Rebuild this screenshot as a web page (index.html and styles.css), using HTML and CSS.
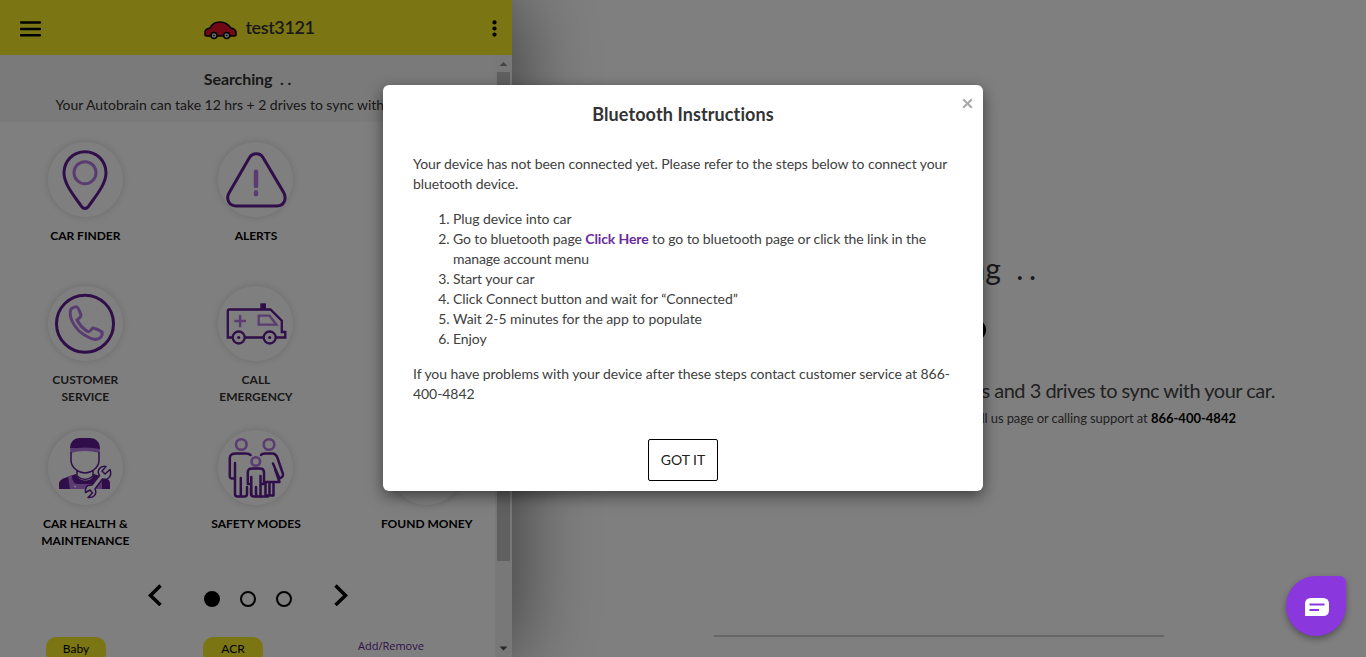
FILE: index.html
```
<!DOCTYPE html>
<html lang="en">
<head>
<meta charset="utf-8">
<title>Autobrain</title>
<link rel="stylesheet" href="styles.css">
</head>
<body>
<div class="page">
  <div class="app">
    <header class="topbar">
      <svg class="menu" width="21" height="16" viewBox="0 0 21 16"><path d="M1 1.500H20M1 8H20M1 14.200H20" stroke="#000" stroke-width="2.400" stroke-linecap="round"/></svg>
      <div class="vehicle">
        <svg width="33" height="19" viewBox="0 0 33 19"><path d="M1 14V10.500Q1.500 8 6 7C8 3 11 1 16 1s8 2 11 6q4 .5 5 4v3q0 1-1.500 1H2.500Q1 15 1 14z" fill="#e3132a" stroke="#000" stroke-width="1.500"/><circle cx="10" cy="14.500" r="3" fill="#d4d8dc" stroke="#000" stroke-width="1.500"/><circle cx="22.700" cy="14.500" r="3" fill="#d4d8dc" stroke="#000" stroke-width="1.500"/><circle cx="10" cy="14.500" r=".8"/><circle cx="22.700" cy="14.500" r=".8"/></svg>
        <span>test3121</span>
      </div>
      <svg class="more" width="5" height="17" viewBox="0 0 5 17"><circle cx="2.500" cy="2.400" r="2.100"/><circle cx="2.500" cy="8.500" r="2.100"/><circle cx="2.500" cy="14.600" r="2.100"/></svg>
    </header>
    <div class="body">
      <div class="content">
        <div class="status"><div class="status-title">Searching&nbsp; . .</div><div class="status-sub">Your Autobrain can take 12 hrs + 2 drives to sync with your car.</div></div>
        <div class="tiles">
          <div class="tile"><div class="disc"><svg viewBox="0 0 75 75"><path class="d w3" d="M37 9.700C25 9.700 16 19 16 31c0 12 12 25 17.500 33.500q3.500 4 7 0C46 56 58 43 58 31 58 19 49 9.700 37 9.700z"/><circle class="l w3" cx="37" cy="30.700" r="11"/></svg></div><span>CAR FINDER</span></div>
          <div class="tile"><div class="disc"><svg viewBox="0 0 75 75"><path class="d w3" d="M31.500 15.500L11.300 50.500C7.500 57 11 64 18 64H59C66 64 69 57 65.700 50.500L45 15.500C42 10.500 34.500 10.500 31.500 15.500z"/><path class="l" stroke-width="4.500" stroke-linecap="round" d="M38 29.700V44M38 50.300V52.300"/></svg></div><span>ALERTS</span></div>
          <div class="tile"><div class="disc"></div></div>
          <div class="tile soft"><div class="disc"><svg viewBox="0 0 75 75"><circle class="d w3" cx="37" cy="37.700" r="28.500"/><path class="l w3" d="M23 23Q27 20 29 21Q31 23 33 29Q33 31 29 34Q32 40 38 44.500Q41 47 43 44L45 42Q50 43 54 46Q55 49 52 52Q47 55 41 51.500Q29 46 24 35Q21 28 23 23z"/></svg></div><span>CUSTOMER<br>SERVICE</span></div>
          <div class="tile soft mid"><div class="disc"><svg viewBox="0 0 75 75"><path class="d w2" d="M14.500 51.500H9.800V25q0-1.500 1.500-1.500H52.500L63.800 34.800V46H67.300V51.500H58M27 51.500H45.500"/><path d="M42.300 17.300H48V23.500H42.300z" fill="#5f1c93"/><circle class="d w2" cx="20.700" cy="51.500" r="6"/><circle class="d w2" cx="51.700" cy="51.500" r="6"/><circle cx="20.700" cy="51.500" r="1.600" fill="#5f1c93"/><circle cx="51.700" cy="51.500" r="1.600" fill="#5f1c93"/><path class="l" stroke-width="2.500" d="M16.300 35H28M22.100 29V41.300"/><path class="l w2" d="M40.700 29.700H51.500L58.500 38.700H40.700z"/></svg></div><span>CALL<br>EMERGENCY</span></div>
          <div class="tile"><div class="disc"></div></div>
          <div class="tile"><div class="disc"><svg viewBox="0 0 75 75"><path fill="#5f1c93" d="M22 18.500C22 11 27 8 32 8H42C48 8 52 12 52 19z"/><path fill="#b578e5" d="M22 19Q37 16 52 19L51.500 23Q37 19 22.500 23z"/><path class="d" stroke-width="1.500" d="M23 22V30C23 38 31 43 37 43S51 38 51 30V22M29 40V46Q37 53 45 46V40"/><path fill="#5f1c93" d="M11 59V53Q12 49 18 47.500L28 44Q30 50 37 50.500T46 44L56 47.500Q62 49 62 53V59z"/><path fill="#b578e5" d="M20 46.500L23.500 45.500Q25 54 29 54H45Q49 54 50.500 45.500L54 46.500V59H22z"/><circle cx="27" cy="56.500" r="1" fill="#fff"/><path fill="#fff" stroke="#5f1c93" stroke-width="1.500" stroke-linejoin="round" d="M58 36.500L54 41L57 44L62 39.500Q64 45 60.500 48Q57.500 50 54.500 49L47 59Q49 63 46 66Q44 68 40 67.500L44.500 63L42 60L37.500 62.500Q37 57 40 55.500L44 55L51.500 45.500Q49 42 51.500 38.500Q54 35.500 58 36.500z"/></svg></div><span>CAR HEALTH &amp;<br>MAINTENANCE</span></div>
          <div class="tile"><div class="disc"><svg viewBox="0 0 75 75"><g class="l" stroke-width="2.600"><circle cx="23.300" cy="14.500" r="5.300"/><circle cx="51" cy="14.500" r="5.300"/><circle cx="37.800" cy="31.500" r="4.300"/></g><g class="d" stroke-width="2.500" stroke-linecap="round" stroke-linejoin="round"><path d="M32.500 25Q31 23.500 28 23.500H18Q12 23.500 11.800 28V47Q12 49 16.500 48.500M17 33V64Q17 66.500 19.500 66.500H26.500Q29 66.500 29 64V57M22.800 48V65"/><path d="M43 25Q44 23.500 47 23.500H54Q58 23.500 59.500 28L65 44Q65.500 47 61.500 48.500L55 33.500M57 39L61.500 52H47M47.500 53V65.500H55.500V53M51.500 53V65M43 66.500H50"/><path d="M33 58V64Q33 66.500 36 66.500M29.800 54V42Q30 38.500 34 38.500H42Q45.800 38.500 46 42V54H42.500V66.500H40Q38 66.500 38 63V57M33.300 47V63Q33.300 66.500 36 66.500H38M30 54H33M42.500 46V53"/></g></svg></div><span>SAFETY MODES</span></div>
          <div class="tile"><div class="disc"></div><span>FOUND MONEY</span></div>
        </div>
        <div class="pager">
          <svg class="chev" width="14" height="22" viewBox="0 0 14 22"><path d="M12.500 1.500L2.500 11.500L12.500 21" fill="none" stroke="#000" stroke-width="3.500"/></svg>
          <div class="dots"><i class="on"></i><i></i><i></i></div>
          <svg class="chev" width="14" height="22" viewBox="0 0 14 22"><path d="M1.500 1.500L11.500 11.500L1.500 21" fill="none" stroke="#000" stroke-width="3.500"/></svg>
        </div>
        <div class="tags"><span class="tag">Baby</span><span class="tag">ACR</span><a class="edit">Add/Remove</a></div>
      </div>
      <div class="scroll"><svg width="17" height="17" viewBox="0 0 17 17"><path d="M4.500 11L8.500 7L12.500 11z" fill="#888"/></svg><div class="thumb"></div><svg width="17" height="17" viewBox="0 0 17 17"><path d="M4.500 6.500L8.500 10.500L12.500 6.500z" fill="#505050"/></svg></div>
    </div>
  </div>
  <main class="main">
    <div class="big">Searching&nbsp; <span>. .</span></div>
    <div class="loader"></div>
    <div class="sync">hours and 3 drives to sync with your car.</div>
    <div class="help">call us page or calling support at <b>866-400-4842</b></div>
    <div class="rule"></div>
  </main>
</div>
<div class="overlay">
  <section class="modal">
    <button class="close" aria-label="Close"><svg width="11" height="11" viewBox="0 0 11 11"><path d="M1.200 1.200L9.800 9.800M9.800 1.200L1.200 9.800" stroke="#aaa" stroke-width="2.200"/></svg></button>
    <h4>Bluetooth Instructions</h4>
    <div class="copy">
      <p>Your device has not been connected yet. Please refer to the steps below to connect your bluetooth device.</p>
      <ol>
        <li>Plug device into car</li>
        <li class="long">Go to bluetooth page <a>Click Here</a> to go to bluetooth page or click the link in the manage account menu</li>
        <li>Start your car</li>
        <li>Click Connect button and wait for “Connected”</li>
        <li>Wait 2-5 minutes for the app to populate</li>
        <li>Enjoy</li>
      </ol>
      <p>If you have problems with your device after these steps contact customer service at 866-400-4842</p>
    </div>
    <button class="ok">GOT IT</button>
  </section>
</div>
<div class="chat"><svg width="24" height="18" viewBox="0 0 24 18"><path d="M0 18V6Q0 0 6 0H18Q24 0 24 6V12Q24 18 18 18z" fill="#fff"/><path d="M4.500 6.500H19.500M4.500 12H14" stroke="#8a37de" stroke-width="1.800"/></svg></div>
</body>
</html>
```
FILE: styles.css
```
* { box-sizing: border-box; }
body { margin: 0; height: 657px; overflow: hidden; font: 14px/20px Lato, sans-serif; font-variant-ligatures: none; color: #333; background: #fff; }
svg { display: block; }
.page { display: flex; height: 657px; }
.app { position: relative; width: 512px; flex: none; display: flex; flex-direction: column; background: #fff; box-shadow: 0 0 80px rgba(0,0,0,.6); z-index: 1; }
.topbar { height: 55px; flex: none; background: #f6ea26; display: flex; align-items: center; justify-content: space-between; padding: 2px 15px 0 20px; }
.vehicle { display: flex; align-items: center; gap: 8px; font-size: 18px; font-weight: 600; letter-spacing: -.4px; padding-right: 14px; }
.vehicle svg { margin-top: 3px; }
.vehicle span { margin-top: -3px; }
.body { flex: 1; min-height: 0; display: flex; overflow: hidden; }
.content { width: 495px; flex: none; overflow: hidden; }
.status { height: 67px; background: #f5f5f5; text-align: center; padding-top: 14px; white-space: nowrap; }
.status-title { font-size: 16px; font-weight: 700; letter-spacing: -.1px; }
.status-sub { padding-top: 6px; letter-spacing: -.04px; }
.tiles { width: 512px; display: grid; grid-template-columns: repeat(3, 1fr); grid-auto-rows: 144px; padding-top: 20px; }
.tile { display: flex; flex-direction: column; align-items: center; gap: 10px; text-align: center; font-size: 12px; line-height: 17px; font-weight: 700; color: #000; }
.soft { color: #333; }
.mid svg { margin-left: -.5px; width: 75px; }
.disc { width: 75px; height: 75px; flex: none; border-radius: 50%; background: #fff; box-shadow: 0 0 8px rgba(0,0,0,.16); }
.d { fill: none; stroke: #5f1c93; }
.l { fill: none; stroke: #b578e5; }
.w3 { stroke-width: 3; }
.w2 { stroke-width: 2.3; }
.pager { height: 48px; padding: 10px 0 0 148px; display: flex; gap: 42px; }
.dots { display: flex; gap: 20px; padding-top: 7px; }
.dots i { width: 16px; height: 16px; border: 2px solid #000; border-radius: 50%; }
.dots .on { background: #000; }
.tags { display: flex; padding: 15px 0 0 46px; font-size: 12px; color: #000; }
.tag { width: 60px; height: 26px; border-radius: 10px; background: #f6ea26; text-align: center; line-height: 24px; margin-right: 97px; }
.tag + .tag { margin-right: 95px; }
.edit { font: 11px/18px "Open Sans", sans-serif; color: #5f1c93; }
.scroll { width: 17px; background: #f1f1f1; display: flex; flex-direction: column; }
.thumb { height: 489px; margin: 0 2px 79px; background: #c1c1c1; flex: none; }
.main { flex: 1; padding-top: 250px; display: flex; flex-direction: column; }
.big { font-size: 30px; line-height: 36px; text-align: center; padding-left: 30px; }
.big span { letter-spacing: -1px; }
.loader { width: 94px; height: 22px; border-radius: 11px; background: #000; margin: 33px auto 0; }
.sync { font-size: 20px; line-height: 24px; margin-top: 37px; text-align: right; padding-right: 91px; white-space: nowrap; letter-spacing: -.5px; color: #444; }
.help { font-size: 13px; line-height: 20px; margin-top: 6px; text-align: right; padding-right: 130px; white-space: nowrap; letter-spacing: -.1px; color: #444; }
.help b { color: #000; letter-spacing: 0; }
.rule { width: 450px; height: 2px; background: #ccc; margin: 207px auto 0; }
.overlay { position: absolute; z-index: 2; inset: 0; background: rgba(0,0,0,.5); padding-top: 85px; }
.modal { position: relative; width: 600px; height: 406px; margin: 0 auto; background: #fff; border-radius: 6px; box-shadow: 0 5px 15px rgba(0,0,0,.5); padding: 19px 30px 10px; display: flex; flex-direction: column; align-items: center; }
.modal h4 { margin: 0; font-size: 18px; line-height: 20px; font-weight: 700; letter-spacing: .1px; }
.close { position: absolute; top: 13px; right: 10px; padding: 0; border: 0; background: none; }
.copy { width: 540px; padding-top: 30px; letter-spacing: -.07px; color: #404040; }
.copy p { margin: 0 0 15px; }
.copy ol { margin: 0 0 15px; padding-left: 40px; }
.copy .long { letter-spacing: -.11px; }
.copy a { font-weight: 700; color: #6a2c9c; }
.ok { width: 70px; height: 42px; margin-top: auto; border: 1px solid #000; border-radius: 2px; background: #fff; color: #222; font: 14px/20px Lato, sans-serif; padding: 0; }
.chat { position: absolute; z-index: 3; right: 20px; bottom: 21px; width: 60px; height: 60px; border-radius: 30px 6px 30px 30px; background: #8a37de; box-shadow: 0 3px 6px rgba(0,0,0,.35); display: flex; align-items: center; justify-content: center; padding: 2px 0 0 2px; }
```
